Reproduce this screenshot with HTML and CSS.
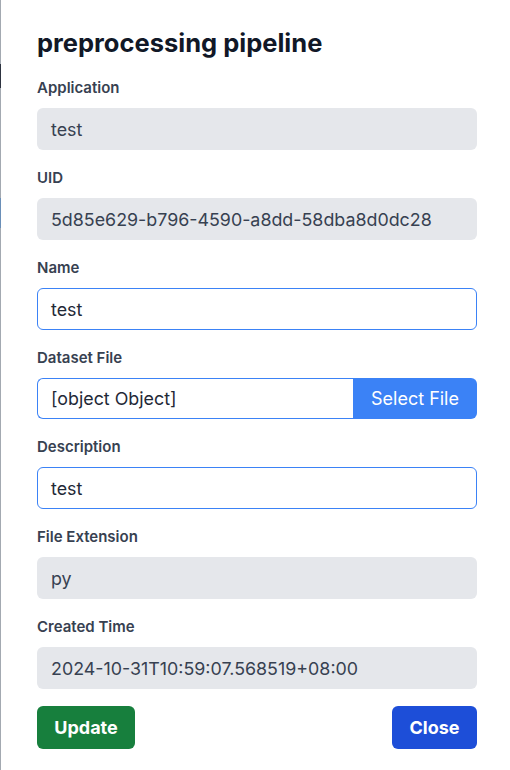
FILE: index.html
```html
<!DOCTYPE html>
<html>
<head>
<meta charset="utf-8">
<link rel="stylesheet" href="styles.css">
</head>
<body>
<div class="edge">
  <span class="edge-mark edge-dark"></span>
  <span class="edge-mark edge-blue"></span>
</div>
<div class="modal">
  <h1 class="title">preprocessing pipeline</h1>
  <div class="group">
    <div class="label">Application</div>
    <div class="field readonly">test</div>
  </div>
  <div class="group">
    <div class="label">UID</div>
    <div class="field readonly">5d85e629-b796-4590-a8dd-58dba8d0dc28</div>
  </div>
  <div class="group">
    <div class="label">Name</div>
    <div class="field editable">test</div>
  </div>
  <div class="group">
    <div class="label">Dataset File</div>
    <div class="file-row">
      <div class="field editable file-input">[object Object]</div>
      <div class="file-btn">Select File</div>
    </div>
  </div>
  <div class="group">
    <div class="label">Description</div>
    <div class="field editable">test</div>
  </div>
  <div class="group">
    <div class="label">File Extension</div>
    <div class="field readonly">py</div>
  </div>
  <div class="group">
    <div class="label">Created Time</div>
    <div class="field readonly">2024-10-31T10:59:07.568519+08:00</div>
  </div>
  <div class="actions">
    <button class="btn btn-update">Update</button>
    <button class="btn btn-close">Close</button>
  </div>
</div>
</body>
</html>
```
FILE: styles.css
```css
* { box-sizing: border-box; }
html, body { margin: 0; padding: 0; background: #ffffff; }
body {
  font-family: Inter, "Noto Sans", sans-serif;
  color: #374151;
  position: relative;
  width: 510px;
  height: 770px;
  overflow: hidden;
}
.edge {
  position: absolute;
  left: 0; top: 0; bottom: 0;
  width: 1px;
  background: #a3a9b1;
}
.edge-mark { position: absolute; left: 0; width: 1px; }
.edge-dark { top: 64px; height: 24px; background: #2d3340; }
.edge-blue { top: 198px; height: 30px; background: #6a8fb8; }
.modal {
  padding: 28px 33px 0 37px;
}
.title {
  margin: 0 0 20px;
  font-size: 25.5px;
  line-height: 30px;
  font-weight: 700;
  color: #111827;
}
.group { margin-bottom: 18px; }
.label {
  font-size: 15px;
  line-height: 20px;
  font-weight: 600;
  color: #374151;
  margin-bottom: 10px;
}
.field {
  height: 42px;
  border-radius: 6px;
  padding: 0 14px;
  display: flex;
  align-items: center;
  font-size: 17.85px;
  color: #374151;
}
.readonly { background: #e5e7eb; }
.editable {
  background: #fff;
  border: 1px solid #3b82f6;
  padding: 0 13px;
  color: #1f2937;
}
.file-row { display: flex; height: 41px; }
.file-input {
  flex: 1;
  height: 41px;
  border-radius: 6px 0 0 6px;
  border-right: none;
}
.file-btn {
  width: 124px;
  background: #3b82f6;
  color: #fff;
  font-size: 18px;
  display: flex;
  align-items: center;
  justify-content: center;
  border-radius: 0 6px 6px 0;
}
.actions {
  display: flex;
  justify-content: space-between;
  margin-top: -1px;
}
.btn {
  border: none;
  height: 43px;
  border-radius: 6px;
  color: #fff;
  font-family: Inter, "Noto Sans", sans-serif;
  font-size: 18px;
  font-weight: 700;
  padding: 0;
}
.btn-update { background: #177f3d; width: 98px; }
.btn-close { background: #1d4ed8; width: 85px; }
```
